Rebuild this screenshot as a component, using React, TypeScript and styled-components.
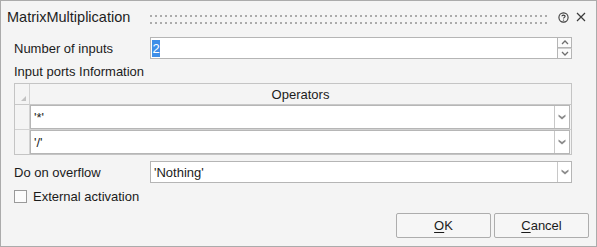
import React from "react";
import styled, { createGlobalStyle } from "styled-components";

const Global = createGlobalStyle`
  html, body { margin: 0; padding: 0; background: #f4f4f4; }
  body {
    font-family: "Liberation Sans", Arial, sans-serif;
    font-size: 13px;
    color: #1b1b1b;
  }
`;

const Window = styled.div`
  width: 597px;
  height: 247px;
  box-sizing: border-box;
  border: 1px solid #ababab;
  background: #f4f4f4;
  display: flex;
  flex-direction: column;
`;

const TitleBar = styled.div`
  height: 32px;
  display: flex;
  align-items: center;
  padding: 0 10px 0 6px;
`;

const Title = styled.div`
  font-size: 14.5px;
  color: #1e1e1e;
  white-space: nowrap;
`;

const Grip = styled.div`
  flex: 1;
  height: 9px;
  margin: 4px 9px 0 17px;
  background-image:
    linear-gradient(90deg, #f4f4f4 0 3px, transparent 3px),
    linear-gradient(#ababab 0 2px, transparent 2px);
  background-size: 5px 7px, 5px 7px;
`;

const TitleIcons = styled.div`
  display: flex;
  align-items: center;
  gap: 7px;
`;

const Body = styled.div`
  padding: 4px 24px 0 13px;
  display: flex;
  flex-direction: column;
`;

const FieldRow = styled.div<{ $mt?: number }>`
  display: grid;
  grid-template-columns: 136px 1fr;
  align-items: center;
  margin-top: ${(p) => p.$mt ?? 0}px;
`;

const Label = styled.div`
  white-space: nowrap;
`;

const SpinField = styled.div`
  display: flex;
  height: 22px;
`;

const TextBox = styled.div`
  flex: 1;
  box-sizing: border-box;
  border: 1px solid #b5b5b5;
  background: #fff;
  padding-left: 1px;
  display: flex;
  align-items: center;
`;

const Selected = styled.span`
  display: inline-block;
  background: #3d8ee8;
  color: #fff;
  line-height: 17px;
  padding: 0 0.5px;
`;

const SpinButtons = styled.div`
  width: 14px;
  display: flex;
  flex-direction: column;
`;

const SpinHalf = styled.div`
  flex: 1;
  box-sizing: border-box;
  border: 1px solid #b5b5b5;
  border-left: none;
  background: #fbfbfb;
  display: flex;
  align-items: center;
  justify-content: center;
  & + & { border-top: 1px solid #d0d0d0; }
`;

const SectionLabel = styled.div`
  margin-top: 5px;
  line-height: 16px;
`;

const Table = styled.div`
  margin-top: 3px;
  border: 1px solid #c4c4c4;
  display: grid;
  grid-template-columns: 15px 1fr;
  grid-auto-rows: auto;
`;

const Corner = styled.div`
  height: 21px;
  box-sizing: border-box;
  border-right: 1px solid #d2d2d2;
  border-bottom: 1px solid #c8c8c8;
  display: flex;
  align-items: flex-end;
  justify-content: flex-end;
  padding: 0 3px 3px 0;
`;

const HeaderCell = styled.div`
  height: 21px;
  box-sizing: border-box;
  border-bottom: 1px solid #c8c8c8;
  display: flex;
  align-items: center;
  justify-content: center;
`;

const RowHead = styled.div`
  height: 24px;
  border-right: 1px solid #d2d2d2;
  border-bottom: 1px solid #d2d2d2;
  &:nth-last-child(2) { border-bottom: none; }
`;

const RowCell = styled.div`
  height: 24px;
  padding-right: 1px;
  border-bottom: 1px solid #d2d2d2;
  &:last-child { border-bottom: none; }
`;

const CellEditor = styled.div`
  height: 24px;
  box-sizing: border-box;
  border: 1px solid #b6b6b6;
  background: #fff;
  display: flex;
`;

const EditorText = styled.div`
  flex: 1;
  display: flex;
  align-items: center;
  padding-left: 3px;
`;

const DropButton = styled.div<{ $w?: number }>`
  width: ${(p) => p.$w ?? 14}px;
  border-left: 1px solid #c8c8c8;
  display: flex;
  align-items: center;
  justify-content: center;
`;

const Combo = styled.div`
  height: 22px;
  box-sizing: border-box;
  border: 1px solid #b5b5b5;
  background: #fff;
  display: flex;
`;

const CheckRow = styled.label`
  margin-top: 7px;
  display: flex;
  align-items: center;
  gap: 6px;
  height: 13px;
`;

const CheckBox = styled.span`
  width: 13px;
  height: 13px;
  box-sizing: border-box;
  border: 1px solid #9a9a9a;
  background: #fcfcfc;
`;

const Footer = styled.div`
  margin-top: auto;
  display: flex;
  justify-content: flex-end;
  gap: 3px;
  padding: 0 7px 8px 0;
`;

const Button = styled.button`
  width: 95px;
  height: 25px;
  box-sizing: border-box;
  border: 1px solid #adadad;
  border-radius: 2px;
  background: #f6f6f6;
  font-family: "Liberation Sans", Arial, sans-serif;
  font-size: 13px;
  color: #1b1b1b;
  padding: 0;
  u { text-decoration-thickness: 1px; text-underline-offset: 2px; }
`;

const DownArrow = () => (
  <svg width="8" height="6" viewBox="0 0 8 6">
    <path d="M0.5 0.5 L4 3 L7.5 0.5 L7.5 2.5 L4 5.5 L0.5 2.5 Z" fill="#8c8c8c" />
  </svg>
);

const Chevron = ({ up }: { up?: boolean }) => (
  <svg width="8" height="5" viewBox="0 0 8 5">
    <polyline
      points={up ? "1,4 4,1 7,4" : "1,1 4,4 7,1"}
      fill="none"
      stroke="#6e6e6e"
      strokeWidth="1.3"
    />
  </svg>
);

const HelpIcon = () => (
  <svg width="11" height="11" viewBox="0 0 11 11">
    <circle cx="5.5" cy="5.5" r="4.6" fill="none" stroke="#3a3a3a" strokeWidth="1.1" />
    <path d="M3.9 4.3 C3.9 2.7 7.1 2.7 7.1 4.3 C7.1 5.4 5.5 5.3 5.5 6.6" fill="none" stroke="#3a3a3a" strokeWidth="1.1" />
    <circle cx="5.5" cy="8.1" r="0.7" fill="#3a3a3a" />
  </svg>
);

const CloseIcon = () => (
  <svg width="10" height="10" viewBox="0 0 10 10">
    <path d="M1 1 L9 9 M9 1 L1 9" stroke="#3a3a3a" strokeWidth="1.2" />
  </svg>
);

const CornerMark = () => (
  <svg width="5" height="5" viewBox="0 0 5 5">
    <path d="M5 0 L5 5 L0 5 Z" fill="#c2c2c2" />
  </svg>
);

const rows = ["'*'", "'/'"];

export default function App() {
  return (
    <>
      <Global />
      <Window>
        <TitleBar>
          <Title>MatrixMultiplication</Title>
          <Grip />
          <TitleIcons>
            <HelpIcon />
            <CloseIcon />
          </TitleIcons>
        </TitleBar>
        <Body>
          <FieldRow>
            <Label>Number of inputs</Label>
            <SpinField>
              <TextBox>
                <Selected>2</Selected>
              </TextBox>
              <SpinButtons>
                <SpinHalf>
                  <Chevron up />
                </SpinHalf>
                <SpinHalf>
                  <Chevron />
                </SpinHalf>
              </SpinButtons>
            </SpinField>
          </FieldRow>
          <SectionLabel>Input ports Information</SectionLabel>
          <Table>
            <Corner>
              <CornerMark />
            </Corner>
            <HeaderCell>Operators</HeaderCell>
            {rows.map((r) => (
              <React.Fragment key={r}>
                <RowHead />
                <RowCell>
                  <CellEditor>
                    <EditorText>{r}</EditorText>
                    <DropButton>
                      <DownArrow />
                    </DropButton>
                  </CellEditor>
                </RowCell>
              </React.Fragment>
            ))}
          </Table>
          <FieldRow $mt={6}>
            <Label>Do on overflow</Label>
            <Combo>
              <EditorText>'Nothing'</EditorText>
              <DropButton $w={13}>
                <DownArrow />
              </DropButton>
            </Combo>
          </FieldRow>
          <CheckRow>
            <CheckBox />
            <span>External activation</span>
          </CheckRow>
        </Body>
        <Footer>
          <Button>
            <u>O</u>K
          </Button>
          <Button>
            <u>C</u>ancel
          </Button>
        </Footer>
      </Window>
    </>
  );
}
